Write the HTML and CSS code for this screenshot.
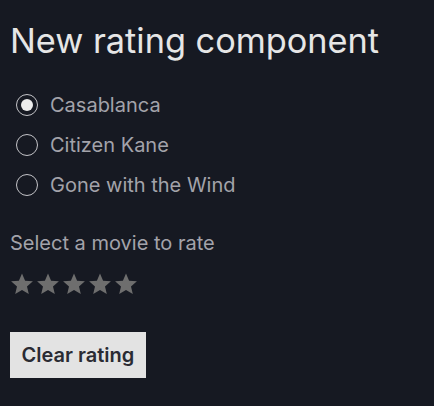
FILE: index.html
```html
<!DOCTYPE html>
<html lang="en">
<head>
    <meta charset="UTF-8">
    <title>New rating component</title>
    <link rel="stylesheet" href="styles.css">
</head>
<body>
    <h1>New rating component</h1>
    <div class="movies">
        <label class="movie"><input type="radio" name="movie" checked><span>Casablanca</span></label>
        <label class="movie"><input type="radio" name="movie"><span>Citizen Kane</span></label>
        <label class="movie"><input type="radio" name="movie"><span>Gone with the Wind</span></label>
    </div>
    <p class="hint">Select a movie to rate</p>
    <div class="stars">
        <svg viewBox="0 0 24 24"><path d="M12 1.5l3.1 7.2 7.8.6-5.9 5.1 1.8 7.6L12 17.9 5.2 22l1.8-7.6-5.9-5.1 7.8-.6z"/></svg>
        <svg viewBox="0 0 24 24"><path d="M12 1.5l3.1 7.2 7.8.6-5.9 5.1 1.8 7.6L12 17.9 5.2 22l1.8-7.6-5.9-5.1 7.8-.6z"/></svg>
        <svg viewBox="0 0 24 24"><path d="M12 1.5l3.1 7.2 7.8.6-5.9 5.1 1.8 7.6L12 17.9 5.2 22l1.8-7.6-5.9-5.1 7.8-.6z"/></svg>
        <svg viewBox="0 0 24 24"><path d="M12 1.5l3.1 7.2 7.8.6-5.9 5.1 1.8 7.6L12 17.9 5.2 22l1.8-7.6-5.9-5.1 7.8-.6z"/></svg>
        <svg viewBox="0 0 24 24"><path d="M12 1.5l3.1 7.2 7.8.6-5.9 5.1 1.8 7.6L12 17.9 5.2 22l1.8-7.6-5.9-5.1 7.8-.6z"/></svg>
    </div>
    <button class="clear">Clear rating</button>
</body>
</html>
```

FILE: styles.css
```css
html {
    background: #161922;
}
body {
    font-family: Inter, sans-serif;
    color: #a3a3aa;
    margin: 0;
    padding: 0 10px;
}
h1 {
    font-size: 34.3px;
    font-weight: 400;
    color: #e6e6e6;
    margin: 20px 0 31px;
    line-height: 42px;
}
.movies {
    display: flex;
    flex-direction: column;
    gap: 16px;
    padding-left: 6px;
}
.movie {
    display: flex;
    align-items: center;
    gap: 12px;
    font-size: 20px;
    line-height: 24px;
}
.movie input {
    appearance: none;
    margin: 0;
    width: 22px;
    height: 22px;
    border: 1.5px solid #c4c4c8;
    border-radius: 50%;
    display: grid;
    place-items: center;
}
.movie input:checked::before {
    content: "";
    width: 12px;
    height: 12px;
    border-radius: 50%;
    background: #ececec;
}
.hint {
    font-size: 20px;
    line-height: 24px;
    margin: 34px 0 17px;
}
.stars {
    display: flex;
    gap: 2px;
}
.stars svg {
    width: 24px;
    height: 24px;
    fill: #6e6e6e;
}
.clear {
    margin-top: 36px;
    font-family: Inter, sans-serif;
    font-size: 20px;
    font-weight: 600;
    color: #2a2b33;
    background: #e3e3e3;
    border: none;
    padding: 11px 11.5px;
}
```
